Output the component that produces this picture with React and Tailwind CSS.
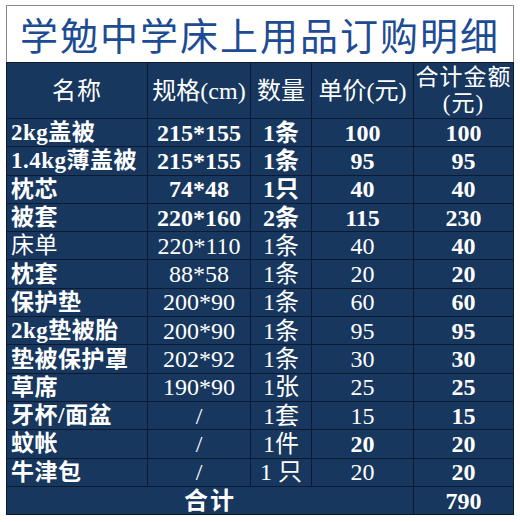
const rows = [
  [["2kg盖被", 1], ["215*155", 1], ["1条", 1], ["100", 1], ["100", 1]],
  [["1.4kg薄盖被", 1], ["215*155", 1], ["1条", 1], ["95", 1], ["95", 1]],
  [["枕芯", 1], ["74*48", 1], ["1只", 1], ["40", 1], ["40", 1]],
  [["被套", 1], ["220*160", 1], ["2条", 1], ["115", 1], ["230", 1]],
  [["床单", 0], ["220*110", 0], ["1条", 0], ["40", 0], ["40", 1]],
  [["枕套", 1], ["88*58", 0], ["1条", 0], ["20", 0], ["20", 1]],
  [["保护垫", 1], ["200*90", 0], ["1条", 0], ["60", 0], ["60", 1]],
  [["2kg垫被胎", 1], ["200*90", 0], ["1条", 0], ["95", 0], ["95", 1]],
  [["垫被保护罩", 1], ["202*92", 0], ["1条", 0], ["30", 0], ["30", 1]],
  [["草席", 1], ["190*90", 0], ["1张", 0], ["25", 0], ["25", 1]],
  [["牙杯/面盆", 1], ["/", 0], ["1套", 0], ["15", 0], ["15", 1]],
  [["蚊帐", 1], ["/", 0], ["1件", 0], ["20", 1], ["20", 1]],
  [["牛津包", 1], ["/", 0], ["1 只", 0], ["20", 0], ["20", 1]],
];

const font = { fontFamily: '"Liberation Serif", "Noto Sans CJK SC", serif' };

export default function App() {
  return (
    <div className="bg-white w-[520px] h-[522px] pl-[6px] pt-[5px]" style={font}>
      <div className="w-[508px]">
        <div className="h-[57px] border border-[#8a8a8a] border-b-0 bg-white flex items-center justify-center">
          <span
            className="text-[38px] leading-none text-[#1d4b94] tracking-[2px]"
            style={{ fontFamily: '"Noto Sans CJK SC", sans-serif' }}
          >
            学勉中学床上用品订购明细
          </span>
        </div>
        <div className="grid grid-cols-[140px_102px_60px_101px_99px] grid-rows-[55px_repeat(14,27.3px)] gap-px bg-[#0b1a31] p-px text-white text-[24px] leading-none">
          <div className="bg-[#17375e] flex items-center justify-center tracking-[1px]">名称</div>
          <div className="bg-[#17375e] flex items-center justify-center">规格(cm)</div>
          <div className="bg-[#17375e] flex items-center justify-center">数量</div>
          <div className="bg-[#17375e] flex items-center justify-center">单价(元)</div>
          <div className="bg-[#17375e] flex flex-col items-center justify-center gap-[3px] text-[23px] tracking-[1px]">
            <span>合计金额</span>
            <span>(元)</span>
          </div>
          {rows.map((r, i) =>
            r.map(([t, b], j) => (
              <div
                key={i + "-" + j}
                className={
                  "bg-[#17375e] flex items-center whitespace-pre " +
                  (j === 0
                    ? "justify-start pl-[4px] text-[23px] tracking-[0.5px] "
                    : "justify-center ") +
                  (b ? "font-bold" : "font-normal")
                }
              >
                {t}
              </div>
            ))
          )}
          <div className="col-span-4 bg-[#17375e] flex items-center justify-center font-bold tracking-[2px]">合计</div>
          <div className="bg-[#17375e] flex items-center justify-center font-bold">790</div>
        </div>
      </div>
    </div>
  );
}
